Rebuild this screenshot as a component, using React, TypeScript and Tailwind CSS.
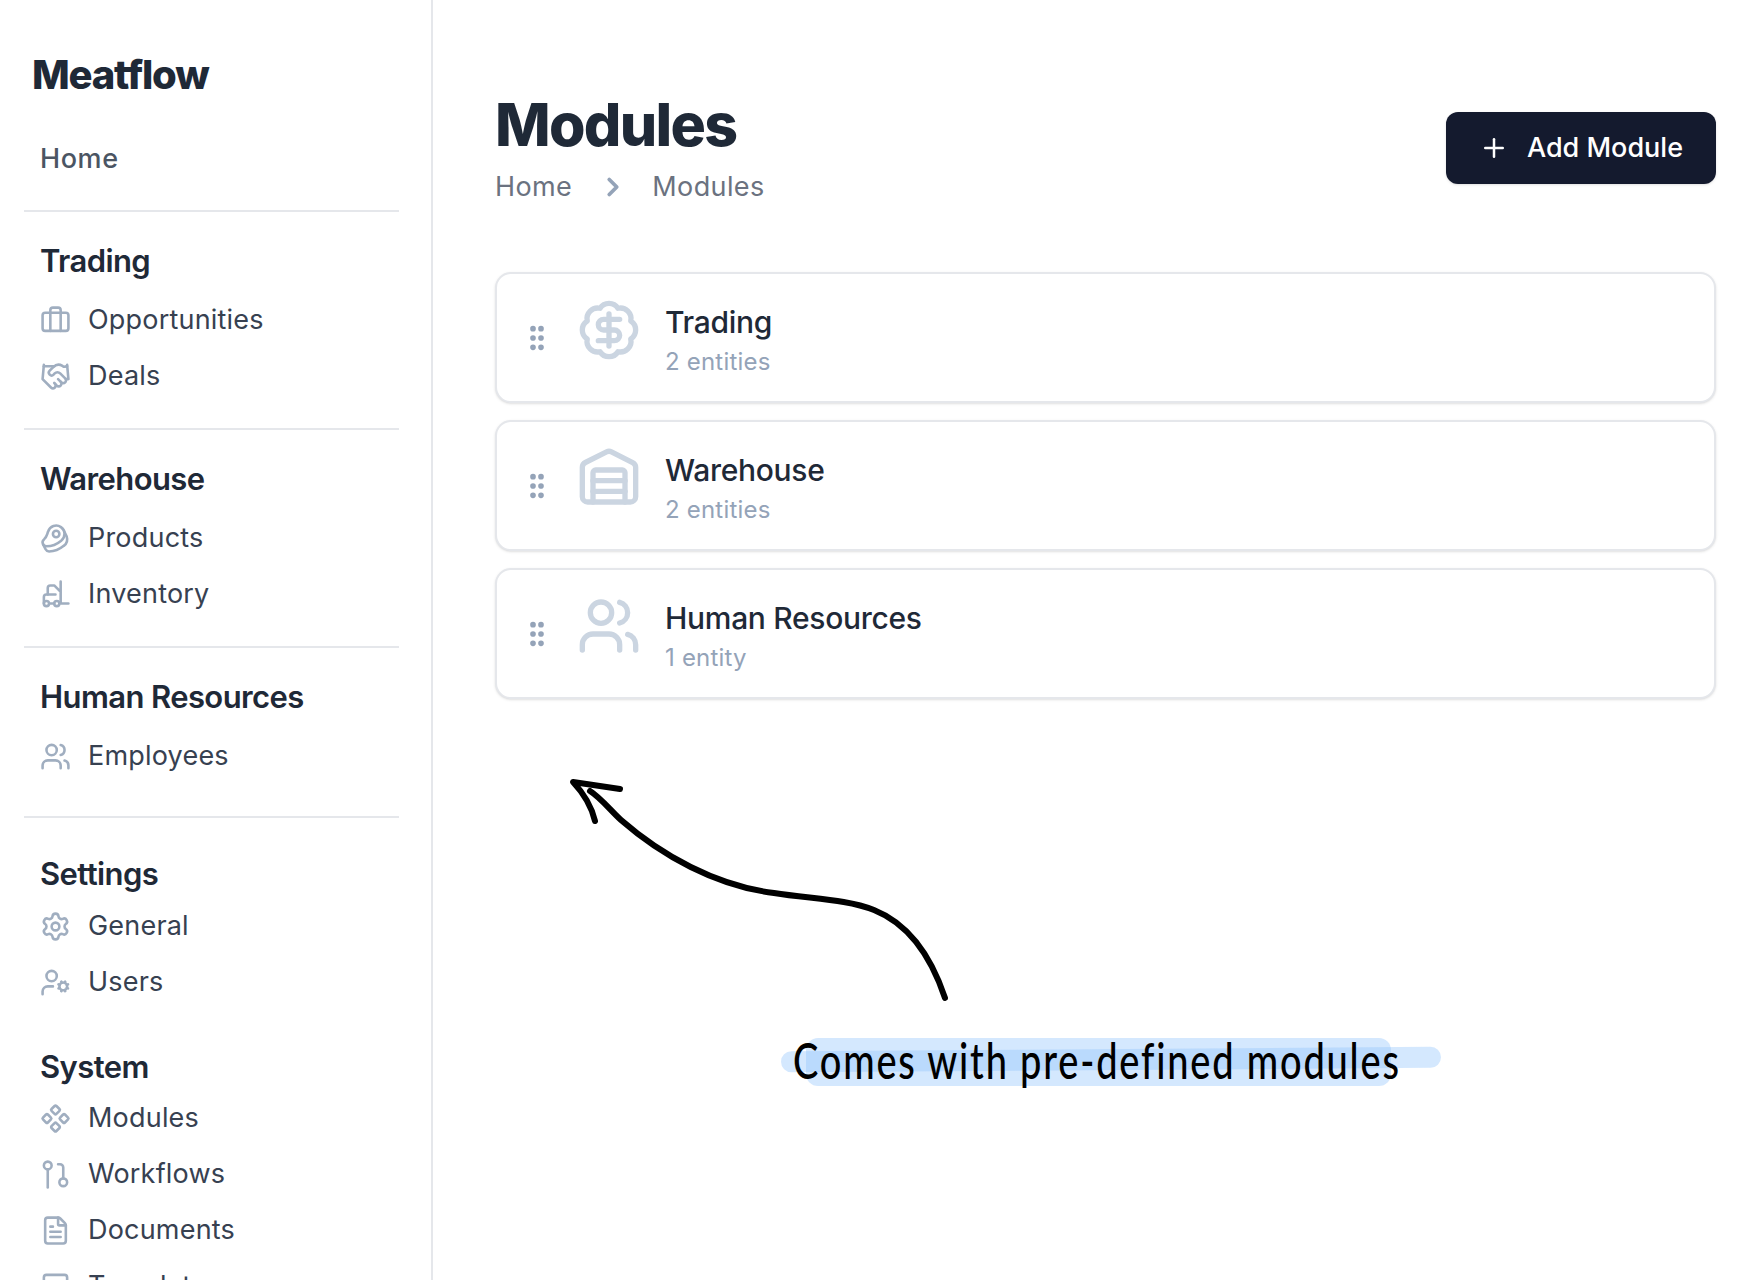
import { Beef, BadgeDollarSign, Briefcase, ChevronRight, Component, FileText, Forklift, GripVertical, Handshake, PanelTop, Plus, Settings, UserCog, Users, Warehouse } from "lucide-react";
import type { ReactNode } from "react";

const WorkflowIcon = ({ className }: { className?: string }) => (
  <svg viewBox="0 0 24 24" fill="none" stroke="currentColor" strokeWidth="2" strokeLinecap="round" strokeLinejoin="round" className={className}>
    <circle cx="6" cy="5" r="3" />
    <path d="M6 8v14" />
    <path d="M14 4h1.5a2.5 2.5 0 0 1 2.5 2.5V15" />
    <circle cx="18" cy="18" r="3" />
  </svg>
);

type Item = { label: string; icon: ReactNode };
const ic = "h-[31px] w-[31px] shrink-0 text-[#a0aec0]";

const groups: { title: string; pt: string; pb: string; gap: string; divider: boolean; items: Item[] }[] = [
  { title: "Trading", pt: "pt-[26px]", pb: "pb-[24px]", gap: "mt-[8px]", divider: true, items: [
    { label: "Opportunities", icon: <Briefcase className={ic} strokeWidth={2} /> },
    { label: "Deals", icon: <Handshake className={ic} strokeWidth={2} /> },
  ] },
  { title: "Warehouse", pt: "pt-[26px]", pb: "pb-[24px]", gap: "mt-[8px]", divider: true, items: [
    { label: "Products", icon: <Beef className={ic} strokeWidth={2} /> },
    { label: "Inventory", icon: <Forklift className={ic} strokeWidth={2} /> },
  ] },
  { title: "Human Resources", pt: "pt-[26px]", pb: "pb-[32px]", gap: "mt-[8px]", divider: true, items: [
    { label: "Employees", icon: <Users className={ic} strokeWidth={2} /> },
  ] },
  { title: "Settings", pt: "pt-[33px]", pb: "pb-[34px]", gap: "mt-[1px]", divider: false, items: [
    { label: "General", icon: <Settings className={ic} strokeWidth={2} /> },
    { label: "Users", icon: <UserCog className={ic} strokeWidth={2} /> },
  ] },
  { title: "System", pt: "pt-0", pb: "pb-0", gap: "mt-0", divider: false, items: [
    { label: "Modules", icon: <Component className={ic} strokeWidth={2} /> },
    { label: "Workflows", icon: <WorkflowIcon className={ic} /> },
    { label: "Documents", icon: <FileText className={ic} strokeWidth={2} /> },
    { label: "Templates", icon: <PanelTop className={ic} strokeWidth={2} /> },
  ] },
];

const modules = [
  { name: "Trading", sub: "2 entities", Icon: BadgeDollarSign },
  { name: "Warehouse", sub: "2 entities", Icon: Warehouse },
  { name: "Human Resources", sub: "1 entity", Icon: Users },
];

export default function App() {
  return (
    <div className="flex h-[1280px] w-[1760px] overflow-hidden bg-white font-['Inter',sans-serif] text-[#1f2937]">
      <aside className="w-[433px] shrink-0 border-r-2 border-[#e5e7eb] pl-[24px] pr-[32px]">
        <div className="pl-[8px] pt-[50px] text-[40px] leading-[50px] font-extrabold tracking-[-1.2px] text-[#1f2937]">Meatflow</div>
        <div className="border-b-2 border-[#e5e7eb] pl-[16px] pt-[41px] pb-[33px]">
          <div className="h-[36px] text-[27px] leading-[36px] font-medium tracking-[0.6px] text-[#4b5563]">Home</div>
        </div>
        {groups.map((g) => (
          <div key={g.title} className={`${g.pt} ${g.pb} pl-[16px] ${g.divider ? "border-b-2 border-[#e5e7eb]" : ""}`}>
            <div className="h-[46px] text-[31px] leading-[46px] font-semibold tracking-[-0.6px] text-[#1f2937]">{g.title}</div>
            <div className={`${g.gap} flex flex-col`}>
              {g.items.map((it) => (
                <div key={it.label} className="flex h-[56px] items-center gap-[17px] text-[#374151]">
                  {it.icon}
                  <span className="text-[27px] leading-[36px] tracking-[0.2px]">{it.label}</span>
                </div>
              ))}
            </div>
          </div>
        ))}
      </aside>
      <main className="relative flex-1 pl-[62px] pr-[44px]">
        <div className="flex items-start justify-between pt-[112px]">
          <div className="-mt-[25px]">
            <h1 className="text-[59px] leading-[76px] font-extrabold tracking-[-1.7px] text-[#1f2937]">Modules</h1>
            <div className="mt-[6px] flex items-center text-[27px] leading-[36px] tracking-[0.4px] text-[#6b7280]">
              <span>Home</span>
              <ChevronRight className="ml-[26px] mr-[24px] h-[30px] w-[30px] text-[#94a3b8]" strokeWidth={3} />
              <span>Modules</span>
            </div>
          </div>
          <button className="flex h-[72px] w-[270px] items-center justify-center gap-[18px] rounded-[12px] bg-[#141a2e] text-[27px] font-medium text-white shadow-sm">
            <Plus className="h-[30px] w-[30px]" strokeWidth={2} />
            <span>Add Module</span>
          </button>
        </div>
        <div className="mt-[67px] flex flex-col gap-[17px]">
          {modules.map(({ name, sub, Icon }) => (
            <div key={name} className="flex h-[131px] items-center rounded-[16px] border-2 border-[#e5e7eb] bg-white pl-[24px] shadow-sm">
              <GripVertical className="h-[32px] w-[32px] text-[#94a3b8]" strokeWidth={2.25} />
              <Icon className="ml-[24px] -mt-[16px] h-[64px] w-[64px] text-[#cbd5e1]" strokeWidth={2} />
              <div className="ml-[24px] pt-[6px]">
                <div className="text-[30px] leading-[40px] font-medium tracking-[-0.3px] text-[#1f2937]">{name}</div>
                <div className="mt-[3px] text-[24px] leading-[34px] tracking-[0.2px] text-[#94a3b8]">{sub}</div>
              </div>
            </div>
          ))}
        </div>
        <svg className="absolute left-0 top-0 h-[1280px] w-[1328px]" viewBox="432 0 1328 1280" fill="none" stroke="#000" strokeLinecap="round" strokeLinejoin="round" strokeWidth="6">
          <path d="M619 789 L572 782 Q589 800 594 821" />
          <path d="M589 791 C600 798 610 811 620 820 C660 855 715 886 773 893 C810 899 845 899 873 910 C908 924 930 956 944 998" />
        </svg>
        <div className="absolute left-[373px] top-[1038px] h-[48px] w-[585px] rounded-[12px] bg-[#93c5fd]/40" />
        <div className="absolute left-[348px] top-[1049px] h-[21px] w-[660px] -rotate-[0.4deg] rounded-full bg-[#93c5fd]/40" />
        <div className="absolute left-[360px] top-[1034px] h-[52px] origin-center scale-y-[1.3] text-[38px] leading-[52px] tracking-[1.8px] text-black font-['Lato',sans-serif] font-medium whitespace-nowrap">Comes with pre-defined modules</div>
      </main>
    </div>
  );
}
